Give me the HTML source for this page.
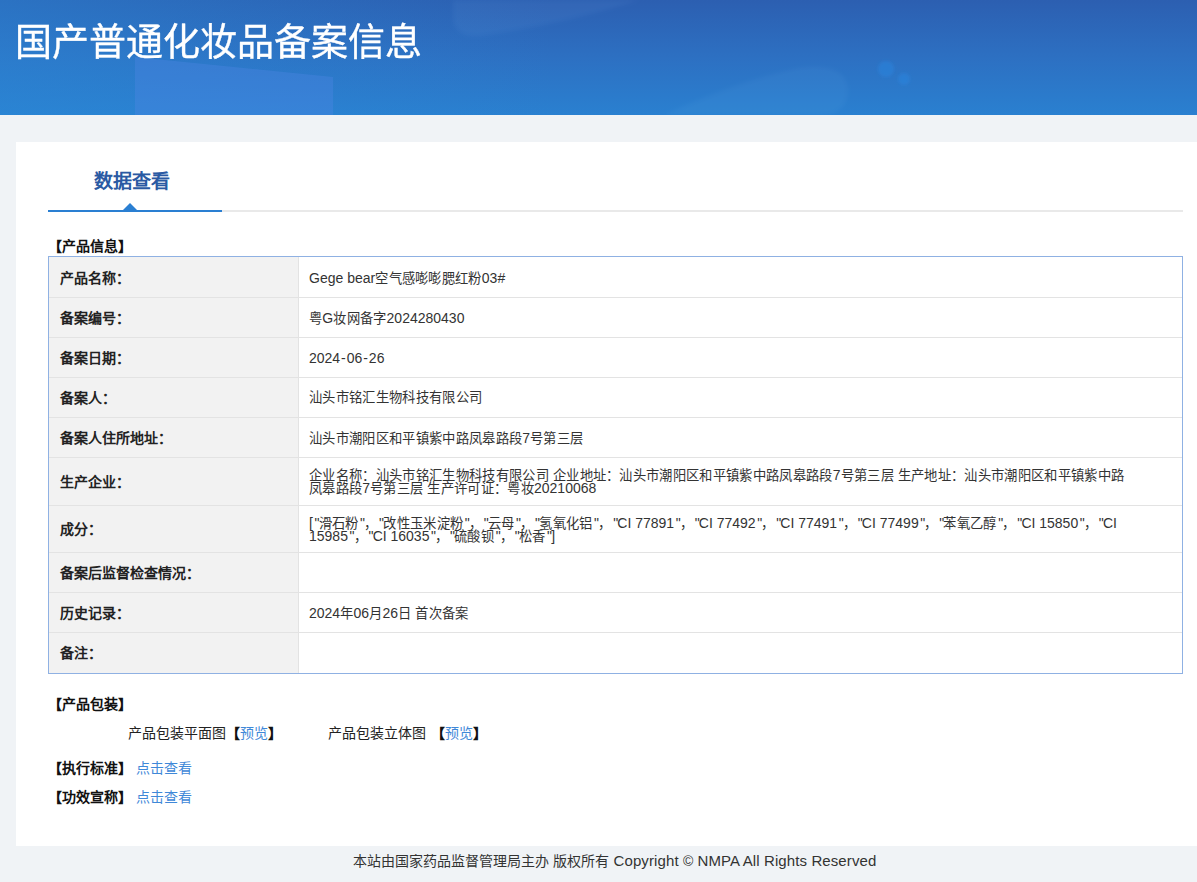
<!DOCTYPE html>
<html lang="zh-CN">
<head>
<meta charset="utf-8">
<style>
html,body{margin:0;padding:0;}
html{overflow:hidden;}
body{width:1230px;height:882px;background:#f0f3f6;font-family:"Liberation Sans",sans-serif;color:#333;position:relative;overflow:hidden;text-spacing-trim:space-all;}
.header{position:absolute;left:0;top:0;width:1230px;height:115px;background:#2b6fc0;overflow:hidden;}
.header h1{position:absolute;left:14.8px;top:17.4px;-webkit-text-stroke:0.35px #fff;transform:scaleY(1.015);transform-origin:0 0;margin:0;font-size:37px;font-weight:normal;color:#fff;line-height:50px;white-space:nowrap;}
.card{position:absolute;left:16px;top:142px;width:1198px;height:704px;background:#fff;}
.tab{position:absolute;left:94px;top:169px;font-size:19px;font-weight:bold;color:#2a5aa3;line-height:26px;}
.tabline{position:absolute;left:48px;top:210px;width:1135px;height:2px;background:#e9e9e9;}
.tabactive{position:absolute;left:48px;top:210px;width:174px;height:2px;background:#2a7fd2;}
.tri{position:absolute;left:123px;top:203px;width:0;height:0;border-left:7px solid transparent;border-right:7px solid transparent;border-bottom:7px solid #2a7fd2;}
.t{position:absolute;font-size:13.33px;letter-spacing:0.33px;white-space:nowrap;line-height:16px;}
.sec{left:48px;font-weight:bold;color:#111;font-size:14px;letter-spacing:0;}
.tbl{position:absolute;left:48px;top:256px;width:1133px;height:416px;border:1px solid #8fb1e3;background:#fff;}
.lab{position:absolute;left:49px;top:257px;width:249px;height:416px;background:#f2f2f2;}
.vdiv{position:absolute;left:298px;top:257px;width:1px;height:416px;background:#e3e3e3;}
.hl{position:absolute;left:49px;width:1133px;height:1px;background:#e3e3e3;}
.lt{left:60px;font-weight:bold;color:#222;font-size:14px;letter-spacing:0;}
.vt{left:309px;color:#333;}
.vt2{line-height:12px;}
.n{font-size:14px;letter-spacing:0;}
.q{font-size:14px;letter-spacing:0.7px;position:relative;left:1.5px;}
.s{font-size:14px;letter-spacing:0;}
.h{font-size:14px;letter-spacing:1.9px;position:relative;left:0.9px;}
.footer .n,.footer .s{font-size:15px;letter-spacing:0.1px;}
.pk{color:#222;font-size:14px;letter-spacing:0;}
.lk{font-size:14px;letter-spacing:0;}
.br{font-weight:bold;color:#111;}
.pk .s{letter-spacing:1px;}
a{color:#3f88d8;text-decoration:none;}
.footer{position:absolute;left:353px;top:852px;font-size:14px;color:#333;line-height:18px;white-space:nowrap;}
</style>
</head>
<body>
<div class="header">
<svg width="1230" height="115" style="position:absolute;left:0;top:0">
<defs>
<linearGradient id="g1" x1="0" y1="0" x2="0" y2="1"><stop offset="0" stop-color="#2c5fb1"/><stop offset="0.5" stop-color="#2d70c2"/><stop offset="1" stop-color="#2a80d0"/></linearGradient>
<linearGradient id="g2" x1="0" y1="0" x2="1" y2="0"><stop offset="0" stop-color="#2a8ad8" stop-opacity="0.45"/><stop offset="0.45" stop-color="#2a8ad8" stop-opacity="0"/></linearGradient>
<filter id="bl" x="-50%" y="-50%" width="200%" height="200%"><feGaussianBlur stdDeviation="1.5"/></filter>
<filter id="bl2" x="-20%" y="-50%" width="140%" height="200%"><feGaussianBlur stdDeviation="2"/></filter>
</defs>
<rect width="1230" height="115" fill="url(#g1)"/>
<rect width="1230" height="115" fill="url(#g2)"/>
<polygon points="135,57 333,77 333,115 135,115" fill="#4f86e6" fill-opacity="0.35"/>
<path d="M453,0 L640,0 Q560,25 480,36 Q452,38 453,15 Z" fill="#9fd0ff" fill-opacity="0.06" filter="url(#bl2)"/>
<path d="M664,115 Q740,80 800,68 Q848,62 848,92 Q846,115 820,115 Z" fill="#9fd0ff" fill-opacity="0.05" filter="url(#bl2)"/>
<circle cx="886" cy="69" r="8" fill="#2a8ae6" fill-opacity="0.4" filter="url(#bl)"/>
<circle cx="904" cy="79" r="6" fill="#2a8ae6" fill-opacity="0.4" filter="url(#bl)"/>
</svg>
  <h1>国产普通化妆品备案信息</h1>
</div>
<div class="card"></div>
<div class="tab">数据查看</div>
<div class="tabline"></div>
<div class="tabactive"></div>
<div class="tri"></div>
<div class="t sec" style="top:238px;">【产品信息】</div>

<div class="tbl"></div>
<div class="lab"></div>
<div class="vdiv"></div>
<div class="hl" style="top:297px"></div>
<div class="hl" style="top:337px"></div>
<div class="hl" style="top:377px"></div>
<div class="hl" style="top:417px"></div>
<div class="hl" style="top:457px"></div>
<div class="hl" style="top:505px"></div>
<div class="hl" style="top:552px"></div>
<div class="hl" style="top:592px"></div>
<div class="hl" style="top:632px"></div>

<div class="t lt" style="top:270px">产品名称：</div>
<div class="t lt" style="top:310px">备案编号：</div>
<div class="t lt" style="top:350px">备案日期：</div>
<div class="t lt" style="top:390px">备案人：</div>
<div class="t lt" style="top:430px">备案人住所地址：</div>
<div class="t lt" style="top:474px">生产企业：</div>
<div class="t lt" style="top:521px">成分：</div>
<div class="t lt" style="top:565px">备案后监督检查情况：</div>
<div class="t lt" style="top:605px">历史记录：</div>
<div class="t lt" style="top:645px">备注：</div>

<div class="t vt" style="top:270px"><span class="n">Gege bear</span>空气感嘭嘭腮红粉<span class="n">03#</span></div>
<div class="t vt" style="top:310px">粤<span class="n">G</span>妆网备字<span class="n">2024280430</span></div>
<div class="t vt" style="top:350px"><span class="n">2024</span><span class="h">-</span><span class="n">06</span><span class="h">-</span><span class="n">26</span></div>
<div class="t vt" style="top:390px">汕头市铭汇生物科技有限公司</div>
<div class="t vt" style="top:430px">汕头市潮阳区和平镇紫中路凤皋路段<span class="n">7</span>号第三层</div>
<div class="t vt vt2" style="top:469px">企业名称：汕头市铭汇生物科技有限公司<span class="s">&#32;</span>企业地址：汕头市潮阳区和平镇紫中路凤皋路段<span class="n">7</span>号第三层<span class="s">&#32;</span>生产地址：汕头市潮阳区和平镇紫中路<br>凤皋路段<span class="n">7</span>号第三层<span class="s">&#32;</span>生产许可证：粤妆<span class="n">20210068</span></div>
<div class="t vt vt2" style="top:517px"><span class="n">[</span><span class="q">&quot;</span>滑石粉<span class="q">&quot;</span>，<span class="q">&quot;</span>改性玉米淀粉<span class="q">&quot;</span>，<span class="q">&quot;</span>云母<span class="q">&quot;</span>，<span class="q">&quot;</span>氢氧化铝<span class="q">&quot;</span>，<span class="q">&quot;</span><span class="n">CI 77891</span><span class="q">&quot;</span>，<span class="q">&quot;</span><span class="n">CI 77492</span><span class="q">&quot;</span>，<span class="q">&quot;</span><span class="n">CI 77491</span><span class="q">&quot;</span>，<span class="q">&quot;</span><span class="n">CI 77499</span><span class="q">&quot;</span>，<span class="q">&quot;</span>苯氧乙醇<span class="q">&quot;</span>，<span class="q">&quot;</span><span class="n">CI 15850</span><span class="q">&quot;</span>，<span class="q">&quot;</span><span class="n">CI</span><br><span class="n">15985</span><span class="q">&quot;</span>，<span class="q">&quot;</span><span class="n">CI 16035</span><span class="q">&quot;</span>，<span class="q">&quot;</span>硫酸钡<span class="q">&quot;</span>，<span class="q">&quot;</span>松香<span class="q">&quot;</span><span class="n">]</span></div>
<div class="t vt" style="top:605px"><span class="n">2024</span>年<span class="n">06</span>月<span class="n">26</span>日<span class="s">&#32;</span>首次备案</div>

<div class="t sec" style="top:696px;">【产品包装】</div>
<div class="t pk" style="left:128px;top:725px;">产品包装平面图<b class="br">【</b><a>预览</a><b class="br">】</b></div>
<div class="t pk" style="left:328px;top:725px;">产品包装立体图<span class="s">&#32;</span><b class="br">【</b><a>预览</a><b class="br">】</b></div>
<div class="t sec" style="top:760px;">【执行标准】</div>
<div class="t lk" style="left:136px;top:760px;"><a>点击查看</a></div>
<div class="t sec" style="top:789px;">【功效宣称】</div>
<div class="t lk" style="left:136px;top:789px;"><a>点击查看</a></div>
<div class="footer">本站由国家药品监督管理局主办<span class="s">&#32;</span>版权所有<span class="n"> Copyright </span>©<span class="n"> NMPA All Rights Reserved</span></div>
</body>
</html>
